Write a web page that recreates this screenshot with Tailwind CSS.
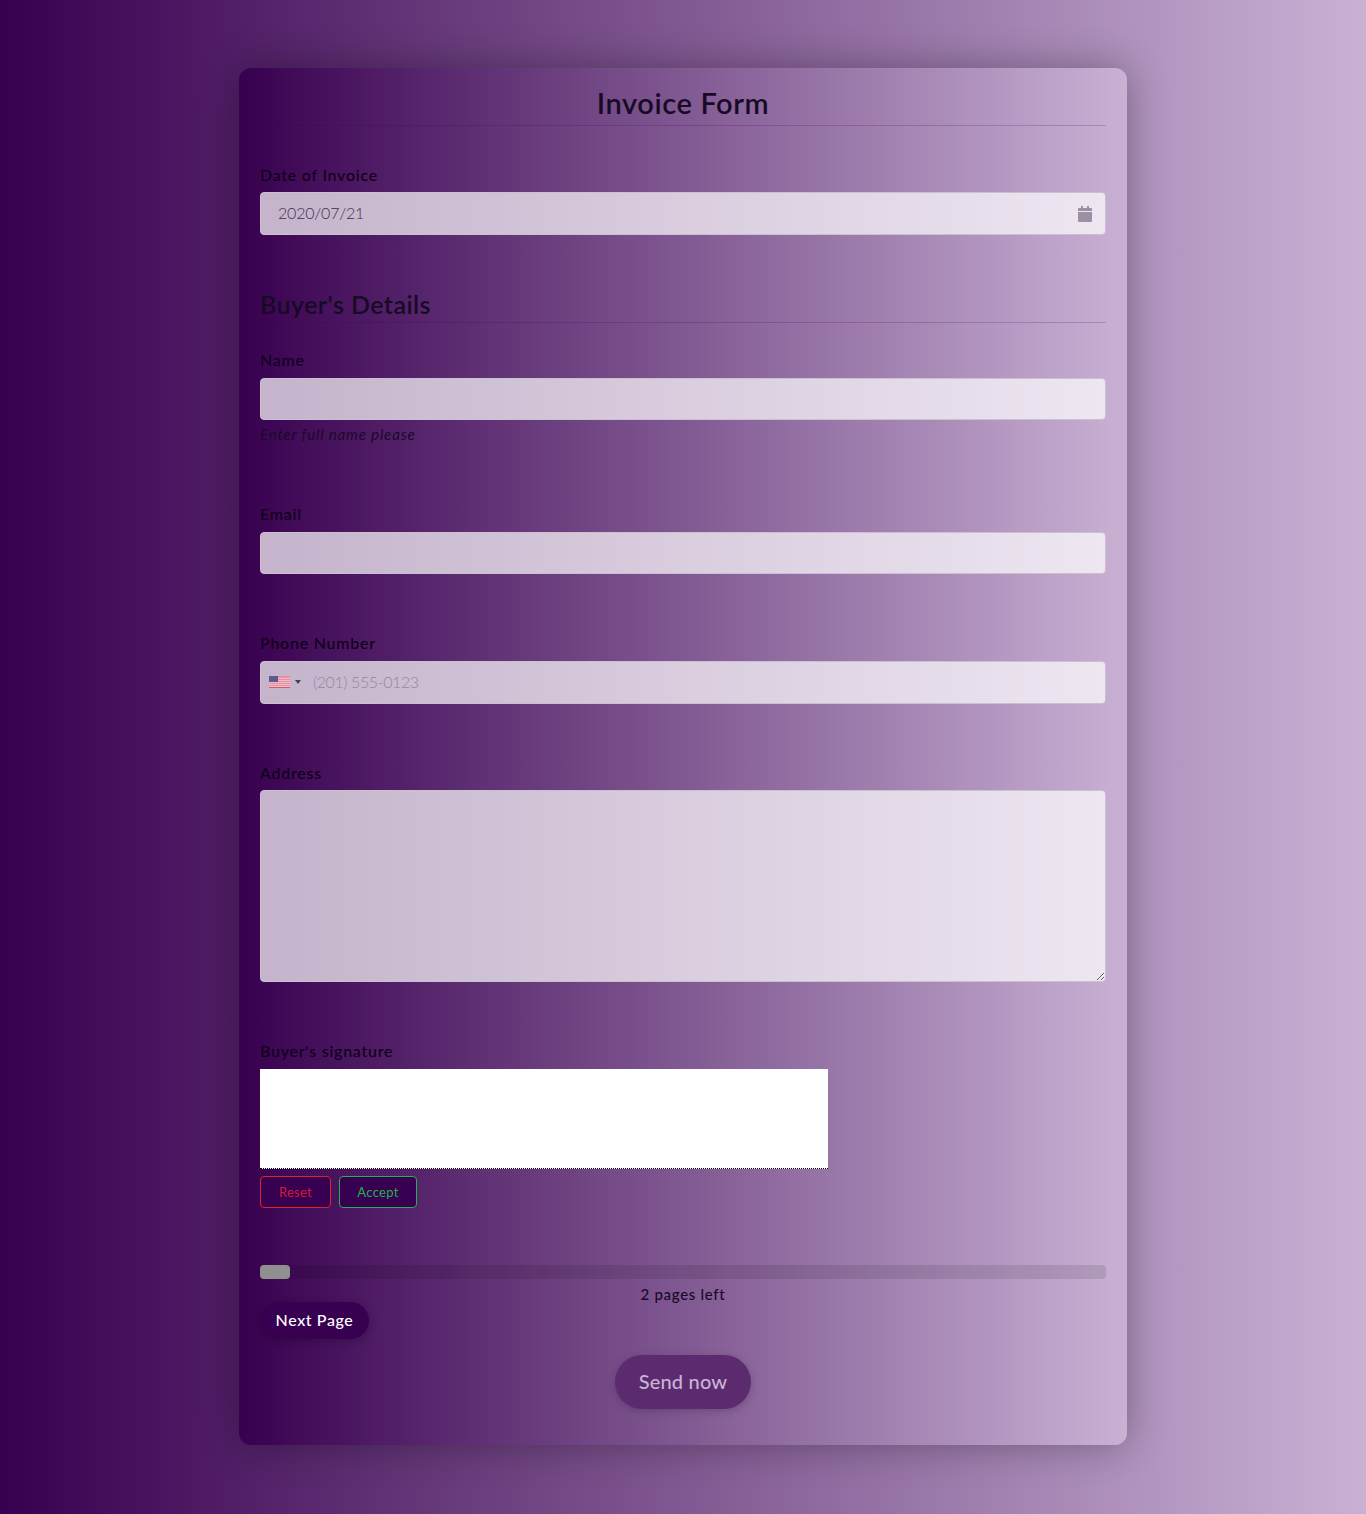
<!DOCTYPE html>
<html lang="en">
<head>
<meta charset="utf-8">
<title>Invoice Form</title>
<script src="https://cdn.jsdelivr.net/npm/@tailwindcss/browser@4"></script>
</head>
<body class="font-['Lato',sans-serif] bg-[linear-gradient(to_right,#380050,#c9b1d4)] min-h-[1514px] pt-[68px]">
  <form class="w-[888px] h-[1377px] ml-[239px] px-[21px] pt-[16px] rounded-xl bg-[linear-gradient(to_right,#380050,#c9b1d4)] shadow-[0_0_40px_rgba(0,0,0,0.33)]">
    <!-- Title -->
    <h1 class="h-[42px] text-center text-[29px] leading-[37px] font-semibold tracking-[0.6px] text-[#170a24] border-b border-[#3a0150]/20">Invoice Form</h1>

    <!-- Date -->
    <label class="block mt-[39px] h-[20px] text-[16px] leading-[20px] font-medium tracking-[0.75px] text-[#0f0118]">Date of Invoice</label>
    <div class="relative mt-[7px]">
      <input type="text" value="2020/07/21" class="w-full h-[43px] px-[17px] pb-[2px] rounded-[4px] border border-[#c9c0d0] bg-white/70 text-[16px] font-light tracking-[-0.2px] text-[#3f2f4c] outline-none">
      <svg class="absolute right-[14px] top-[14px] w-[14px] h-[16px]" viewBox="0 0 14 16" fill="#9b8fa3">
        <path d="M3 0h2v2H3zM9 0h2v2H9z"/>
        <path d="M1 2h12a1 1 0 0 1 1 1v2H0V3a1 1 0 0 1 1-1zM0 6h14v9a1 1 0 0 1-1 1H1a1 1 0 0 1-1-1z"/>
      </svg>
    </div>

    <!-- Buyer -->
    <h2 class="mt-[56px] h-[32px] text-[25px] leading-[26px] font-semibold tracking-[0.45px] text-[#170a24] border-b border-[#3a0150]/20">Buyer's Details</h2>

    <label class="block mt-[27px] h-[20px] text-[16px] leading-[20px] font-medium tracking-[0.75px] text-[#0f0118]">Name</label>
    <input type="text" class="block w-full h-[42px] mt-[8px] px-[17px] rounded-[4px] border border-[#c9c0d0] bg-white/70 outline-none">
    <p class="mt-[5px] h-[20px] text-[15px] leading-[19px] italic tracking-[0.85px] text-[#1a0a28]">Enter full name please</p>

    <label class="block mt-[59px] h-[20px] text-[16px] leading-[20px] font-medium tracking-[0.75px] text-[#0f0118]">Email</label>
    <input type="text" class="block w-full h-[42px] mt-[8px] px-[17px] rounded-[4px] border border-[#c9c0d0] bg-white/70 outline-none">

    <label class="block mt-[59px] h-[20px] text-[16px] leading-[20px] font-medium tracking-[0.75px] text-[#0f0118]">Phone Number</label>
    <div class="flex items-center w-full h-[43px] mt-[8px] pl-[8px] rounded-[4px] border border-[#c9c0d0] bg-white/70">
      <svg class="w-[21px] h-[12px] -mt-[1px]" viewBox="0 0 21 12">
        <rect width="21" height="12" fill="#e8909f"/>
        <path d="M0 2h21v1H0zM0 4h21v1H0zM0 6h21v1H0zM0 8h21v1H0zM0 10h21v1H0z" fill="#eebcc6"/>
        <rect y="11" width="21" height="1" fill="#c9606f"/>
        <rect width="9" height="6" fill="#5d5a8c"/>
      </svg>
      <span class="ml-[5px] -mt-[2px] w-0 h-0 border-x-[3px] border-x-transparent border-t-[4px] border-t-[#4b4250]"></span>
      <input type="text" placeholder="(201) 555-0123" class="flex-1 ml-[12px] h-full pb-[2px] bg-transparent text-[16px] font-light tracking-[-0.4px] text-[#4a3a55] placeholder:text-[#94869f] outline-none">
    </div>

    <label class="block mt-[59px] h-[20px] text-[16px] leading-[20px] font-medium tracking-[0.75px] text-[#0f0118]">Address</label>
    <textarea class="block w-full h-[192px] mt-[7px] px-[17px] py-2 rounded-[4px] border border-[#c9c0d0] bg-white/70 outline-none"></textarea>

    <!-- Signature -->
    <label class="block mt-[59px] h-[20px] text-[16px] leading-[20px] font-medium tracking-[0.75px] text-[#0f0118]">Buyer's signature</label>
    <div class="w-[568px] h-[100px] mt-[8px] bg-white border-b border-dotted border-black"></div>
    <div class="flex gap-[8px] mt-[7px]">
      <button type="button" class="w-[71px] h-[32px] pt-[1px] rounded-[4px] border border-[#dc2626] bg-[#380050] text-[13px] tracking-[0.3px] text-[#d11a3c]">Reset</button>
      <button type="button" class="w-[78px] h-[32px] pt-[1px] rounded-[4px] border border-[#22b14c] bg-[#380050] text-[13px] tracking-[0.3px] text-[#22b14c]">Accept</button>
    </div>

    <!-- Progress -->
    <div class="mt-[57px] h-[14px] rounded-[4px] bg-black/10">
      <div class="w-[30px] h-[14px] rounded-[4px] bg-[#8f8f8f]"></div>
    </div>
    <p class="mt-[6px] h-[17px] text-center text-[15px] leading-[19px] font-medium tracking-[0.7px] text-[#170a24]">2 pages left</p>
    <button type="button" class="block w-[109px] h-[37px] rounded-full bg-[#380050] pb-[1px] text-[16px] font-medium tracking-[0.6px] text-white shadow-[0_2px_8px_rgba(0,0,0,0.25)]">Next Page</button>
    <button type="button" class="block w-[136px] h-[54px] mx-auto mt-[16px] pb-[2px] rounded-full bg-[#5c2a6e] text-[20px] font-medium tracking-[0.2px] text-[#c9b3d6] shadow-[0_2px_8px_rgba(0,0,0,0.2)]">Send now</button>
  </form>
</body>
</html>
